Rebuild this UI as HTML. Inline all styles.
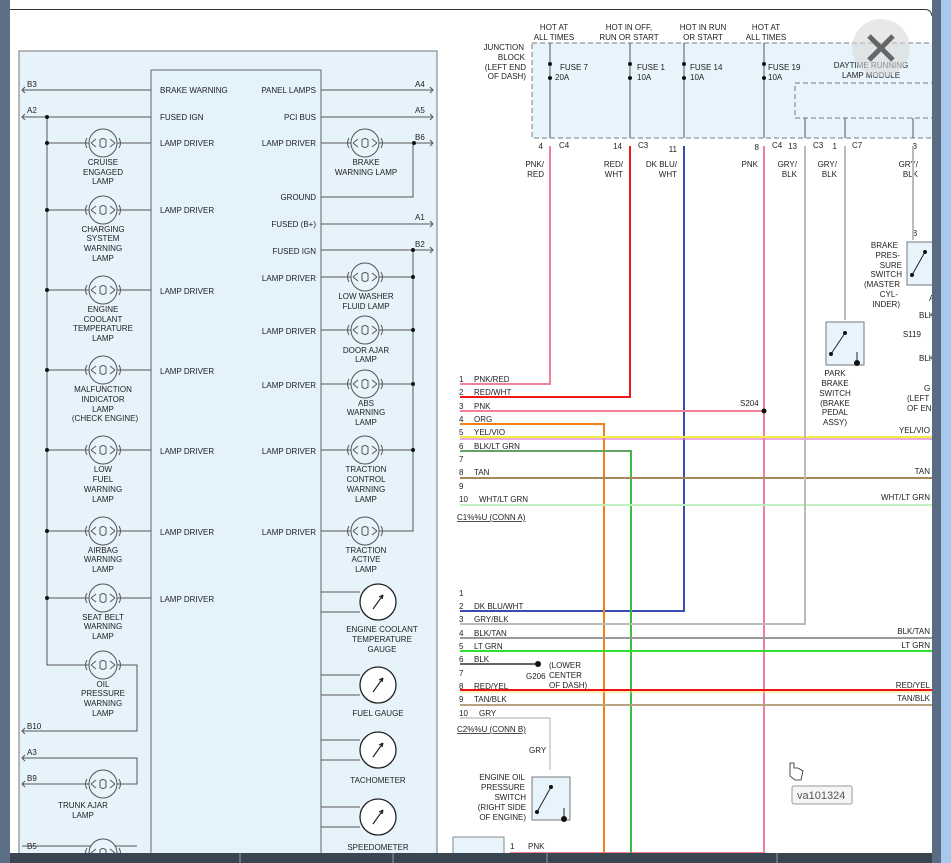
<!DOCTYPE html>
<html><head><meta charset="utf-8"><style>
html,body{margin:0;padding:0;width:951px;height:863px;overflow:hidden;background:#fff}
svg{display:block}
text{font-family:"Liberation Sans",Arial,sans-serif;font-size:8px;fill:#222}
</style></head><body>
<svg width="951" height="863" viewBox="0 0 951 863" xmlns="http://www.w3.org/2000/svg">
<defs>
<g id="lamp"><circle r="14" fill="#e8f4fc" stroke="#555" stroke-width="1"/><path d="M-16,-5 Q-19,0 -16,5 M16,-5 Q19,0 16,5 M-12,0 L-7,-4 M-12,0 L-7,4 M12,0 L7,-4 M12,0 L7,4 M-3,-3 Q0,-6 3,-3 L3,3 Q0,6 -3,3 Z" fill="none" stroke="#555" stroke-width="1"/></g>
<g id="gauge"><circle r="18" fill="#fff" stroke="#222" stroke-width="1.3"/><path d="M-5,7 L5,-7 M5,-7 L1,-5 M5,-7 L4,-3" stroke="#222" fill="none" stroke-width="1.2"/></g>
</defs>
<path d="M10,9.5 H925 Q931,9.5 932,16" stroke="#333" fill="none"/>
<!-- left box -->
<rect x="19" y="51" width="418" height="812" fill="#e6f3fb" stroke="#777"/>
<rect x="151" y="70" width="170" height="793" fill="#e3f2fb" stroke="#666"/>
<g stroke="#555" stroke-width="1" fill="none">
<path d="M22,90 H151 M22,117 H151 M321,90 H433 M321,117 H433 M321,143 H413 V197 H321 M413,143 H433 M321,224 H433 M321,250 H433 M413,250 V531 H321 M321,277 H413 M321,330 H413 M321,384 H413 M321,450 H413"/>
<path d="M47,117 V665 H137 V731 H22 M47,143 H151 M47,210 H151 M47,290 H151 M47,370 H151 M47,450 H151 M47,531 H151 M47,598 H151"/>
<path d="M22,758 H137 V784 H22 M22,846 H137"/>
<path d="M25,87 L22,90 L25,93 M25,114 L22,117 L25,120 M25,728 L22,731 L25,734 M25,755 L22,758 L25,761 M25,781 L22,784 L25,787 M430,87 L433,90 L430,93 M430,114 L433,117 L430,120 M430,140 L433,143 L430,146 M430,221 L433,224 L430,227 M430,247 L433,250 L430,253"/>
<path d="M321,592 H360 M321,612 H360 M321,675 H360 M321,695 H360 M321,740 H360 M321,760 H360 M321,807 H360 M321,827 H360"/>
</g>
<g fill="#111"><circle cx="47" cy="117" r="2"/><circle cx="47" cy="143" r="2"/><circle cx="47" cy="210" r="2"/><circle cx="47" cy="290" r="2"/><circle cx="47" cy="370" r="2"/><circle cx="47" cy="450" r="2"/><circle cx="47" cy="531" r="2"/><circle cx="47" cy="598" r="2"/><circle cx="414" cy="143" r="2"/><circle cx="413" cy="250" r="2"/><circle cx="413" cy="277" r="2"/><circle cx="413" cy="330" r="2"/><circle cx="413" cy="384" r="2"/><circle cx="413" cy="450" r="2"/></g>
<use href="#lamp" x="103" y="143"/><use href="#lamp" x="103" y="210"/><use href="#lamp" x="103" y="290"/><use href="#lamp" x="103" y="370"/><use href="#lamp" x="103" y="450"/><use href="#lamp" x="103" y="531"/><use href="#lamp" x="103" y="598"/><use href="#lamp" x="103" y="665"/><use href="#lamp" x="103" y="784"/><use href="#lamp" x="103" y="853"/>
<use href="#lamp" x="365" y="143"/><use href="#lamp" x="365" y="277"/><use href="#lamp" x="365" y="330"/><use href="#lamp" x="365" y="384"/><use href="#lamp" x="365" y="450"/><use href="#lamp" x="365" y="531"/>
<use href="#gauge" x="378" y="602"/><use href="#gauge" x="378" y="685"/><use href="#gauge" x="378" y="750"/><use href="#gauge" x="378" y="817"/>
<g>
<text x="27" y="87">B3</text><text x="27" y="113">A2</text><text x="415" y="87">A4</text><text x="415" y="113">A5</text><text x="415" y="140">B6</text><text x="415" y="220">A1</text><text x="415" y="247">B2</text>
<text x="27" y="729">B10</text><text x="27" y="755">A3</text><text x="27" y="781">B9</text><text x="27" y="849">B5</text>
<text x="160" y="93">BRAKE WARNING</text><text x="160" y="120">FUSED IGN</text>
<text x="160" y="146">LAMP DRIVER</text><text x="160" y="213">LAMP DRIVER</text><text x="160" y="294">LAMP DRIVER</text><text x="160" y="374">LAMP DRIVER</text><text x="160" y="454">LAMP DRIVER</text><text x="160" y="535">LAMP DRIVER</text><text x="160" y="602">LAMP DRIVER</text>
</g>
<g text-anchor="end">
<text x="316" y="93">PANEL LAMPS</text><text x="316" y="120">PCI BUS</text><text x="316" y="146">LAMP DRIVER</text><text x="316" y="200">GROUND</text><text x="316" y="227">FUSED (B+)</text><text x="316" y="254">FUSED IGN</text>
<text x="316" y="281">LAMP DRIVER</text><text x="316" y="334">LAMP DRIVER</text><text x="316" y="388">LAMP DRIVER</text><text x="316" y="454">LAMP DRIVER</text><text x="316" y="535">LAMP DRIVER</text>
</g>
<g text-anchor="middle">
<text x="103" y="165">CRUISE</text><text x="103" y="175">ENGAGED</text><text x="103" y="184">LAMP</text>
<text x="103" y="232">CHARGING</text><text x="103" y="241">SYSTEM</text><text x="103" y="251">WARNING</text><text x="103" y="261">LAMP</text>
<text x="103" y="312">ENGINE</text><text x="103" y="322">COOLANT</text><text x="103" y="331">TEMPERATURE</text><text x="103" y="341">LAMP</text>
<text x="103" y="392">MALFUNCTION</text><text x="103" y="402">INDICATOR</text><text x="103" y="412">LAMP</text><text x="105" y="421">(CHECK ENGINE)</text>
<text x="103" y="472">LOW</text><text x="103" y="482">FUEL</text><text x="103" y="492">WARNING</text><text x="103" y="502">LAMP</text>
<text x="103" y="553">AIRBAG</text><text x="103" y="562">WARNING</text><text x="103" y="572">LAMP</text>
<text x="103" y="620">SEAT BELT</text><text x="103" y="629">WARNING</text><text x="103" y="639">LAMP</text>
<text x="103" y="687">OIL</text><text x="103" y="696">PRESSURE</text><text x="103" y="706">WARNING</text><text x="103" y="716">LAMP</text>
<text x="83" y="808">TRUNK AJAR</text><text x="83" y="818">LAMP</text>
<text x="366" y="165">BRAKE</text><text x="366" y="175">WARNING LAMP</text>
<text x="366" y="299">LOW WASHER</text><text x="366" y="309">FLUID LAMP</text>
<text x="366" y="353">DOOR AJAR</text><text x="366" y="362">LAMP</text>
<text x="366" y="406">ABS</text><text x="366" y="415">WARNING</text><text x="366" y="425">LAMP</text>
<text x="366" y="472">TRACTION</text><text x="366" y="482">CONTROL</text><text x="366" y="492">WARNING</text><text x="366" y="502">LAMP</text>
<text x="366" y="553">TRACTION</text><text x="366" y="562">ACTIVE</text><text x="366" y="572">LAMP</text>
<text x="382" y="632">ENGINE COOLANT</text><text x="382" y="642">TEMPERATURE</text><text x="382" y="652">GAUGE</text>
<text x="378" y="716">FUEL GAUGE</text><text x="378" y="783">TACHOMETER</text><text x="378" y="850">SPEEDOMETER</text>
</g>
<!-- right side -->
<rect x="532" y="43" width="420" height="95" fill="#e8f4fc" stroke="#777" stroke-dasharray="5,3"/>
<rect x="795" y="83" width="157" height="35" fill="#e8f4fc" stroke="#777" stroke-dasharray="5,3"/>
<g text-anchor="middle">
<text x="554" y="30">HOT AT</text><text x="554" y="40">ALL TIMES</text>
<text x="629" y="30">HOT IN OFF,</text><text x="629" y="40">RUN OR START</text>
<text x="703" y="30">HOT IN RUN</text><text x="703" y="40">OR START</text>
<text x="766" y="30">HOT AT</text><text x="766" y="40">ALL TIMES</text>
<text x="871" y="68">DAYTIME RUNNING</text><text x="871" y="78">LAMP MODULE</text>
</g>
<g text-anchor="end">
<text x="524" y="50">JUNCTION</text><text x="525" y="60">BLOCK</text><text x="526" y="70">(LEFT END</text><text x="526" y="79">OF DASH)</text>
<text x="544" y="167">PNK/</text><text x="544" y="177">RED</text><text x="623" y="167">RED/</text><text x="623" y="177">WHT</text><text x="677" y="167">DK BLU/</text><text x="677" y="177">WHT</text><text x="758" y="167">PNK</text>
<text x="797" y="167">GRY/</text><text x="797" y="177">BLK</text><text x="837" y="167">GRY/</text><text x="837" y="177">BLK</text><text x="918" y="167">GRY/</text><text x="918" y="177">BLK</text>
<text x="543" y="149">4</text><text x="622" y="149">14</text><text x="677" y="152">11</text><text x="759" y="150">8</text><text x="797" y="149">13</text><text x="837" y="149">1</text><text x="917" y="149">3</text>
<text x="930" y="433">YEL/VIO</text><text x="930" y="474">TAN</text><text x="930" y="500">WHT/LT GRN</text><text x="930" y="634">BLK/TAN</text><text x="930" y="648">LT GRN</text><text x="930" y="688">RED/YEL</text><text x="930" y="701">TAN/BLK</text>
<text x="898" y="248">BRAKE</text><text x="900" y="258">PRES-</text><text x="902" y="268">SURE</text><text x="902" y="277">SWITCH</text><text x="900" y="287">(MASTER</text><text x="898" y="297">CYL-</text><text x="900" y="307">INDER)</text>
<text x="921" y="337">S119</text>
</g>
<g>
<text x="560" y="70">FUSE 7</text><text x="555" y="80">20A</text><text x="637" y="70">FUSE 1</text><text x="637" y="80">10A</text><text x="690" y="70">FUSE 14</text><text x="690" y="80">10A</text><text x="768" y="70">FUSE 19</text><text x="768" y="80">10A</text>
<text x="559" y="148">C4</text><text x="638" y="148">C3</text><text x="772" y="148">C4</text><text x="813" y="148">C3</text><text x="852" y="148">C7</text>
<text x="929" y="301">A</text><text x="919" y="318">BLK</text><text x="919" y="361">BLK</text><text x="924" y="391">G</text><text x="907" y="401">(LEFT</text><text x="907" y="411">OF EN</text><text x="912" y="236">B</text>
</g>
<g stroke="#555" fill="none">
<path d="M550,43 V138 M630,43 V138 M684,43 V138 M764,43 V138 M805,118 V138 M845,118 V138 M913,118 V138"/>
</g>
<g fill="#111"><circle cx="550" cy="64" r="2"/><circle cx="550" cy="78" r="2"/><circle cx="630" cy="64" r="2"/><circle cx="630" cy="78" r="2"/><circle cx="684" cy="64" r="2"/><circle cx="684" cy="78" r="2"/><circle cx="764" cy="64" r="2"/><circle cx="764" cy="78" r="2"/></g>
<g fill="none" stroke-width="2">
<path d="M550,146 V384 H460" stroke="#f48098"/>
<path d="M630,146 V397 H460" stroke="#f21818"/>
<path d="M684,146 V611 H460" stroke="#3c4bb0"/>
<path d="M764,146 V853 H510" stroke="#f48098"/>
<path d="M764,411 H460" stroke="#f48098"/>
<path d="M604,853 V424 H460" stroke="#f48018"/>
<path d="M631,853 V451 H460" stroke="#3fbb3f"/>
<path d="M631,451 H460" stroke="#888" stroke-width="1"/>
<path d="M460,437 H932" stroke="#f0f040"/><path d="M460,439 H932" stroke="#e070d0" stroke-width="1.2"/>
<path d="M460,478 H932" stroke="#a8875a"/>
<path d="M460,505 H932" stroke="#c0f0c0"/>
<path d="M805,146 V624 H460" stroke="#bbb"/>
<path d="M845,146 V320" stroke="#bbb"/>
<path d="M913,146 V240" stroke="#bbb"/>
<path d="M460,638 H932" stroke="#999"/>
<path d="M460,651 H932" stroke="#30e030"/>
<path d="M460,664 H535" stroke="#666"/>
<path d="M460,690 H932" stroke="#f01010"/><path d="M460,692 H932" stroke="#f0e070" stroke-width="1"/>
<path d="M460,705 H932" stroke="#b8a480"/>
<path d="M460,718 H550 V770" stroke="#bbb" stroke-width="1.2"/>
</g>
<circle cx="764" cy="411" r="2.5" fill="#111"/>
<circle cx="538" cy="664" r="3" fill="#111"/>
<g>
<text x="459" y="382">1</text><text x="474" y="382">PNK/RED</text><text x="459" y="395">2</text><text x="474" y="395">RED/WHT</text><text x="459" y="409">3</text><text x="474" y="409">PNK</text><text x="459" y="422">4</text><text x="474" y="422">ORG</text><text x="459" y="435">5</text><text x="474" y="435">YEL/VIO</text><text x="459" y="449">6</text><text x="474" y="449">BLK/LT GRN</text><text x="459" y="462">7</text><text x="459" y="475">8</text><text x="474" y="475">TAN</text><text x="459" y="489">9</text><text x="459" y="502">10</text><text x="479" y="502">WHT/LT GRN</text>
<text x="457" y="520" text-decoration="underline">C1%%U (CONN A)</text>
<text x="459" y="596">1</text><text x="459" y="609">2</text><text x="474" y="609">DK BLU/WHT</text><text x="459" y="622">3</text><text x="474" y="622">GRY/BLK</text><text x="459" y="636">4</text><text x="474" y="636">BLK/TAN</text><text x="459" y="649">5</text><text x="474" y="649">LT GRN</text><text x="459" y="662">6</text><text x="474" y="662">BLK</text><text x="459" y="676">7</text><text x="459" y="689">8</text><text x="474" y="689">RED/YEL</text><text x="459" y="702">9</text><text x="474" y="702">TAN/BLK</text><text x="459" y="716">10</text><text x="479" y="716">GRY</text>
<text x="457" y="732" text-decoration="underline">C2%%U (CONN B)</text>
<text x="526" y="679">G206</text><text x="549" y="668">(LOWER</text><text x="549" y="678">CENTER</text><text x="549" y="688">OF DASH)</text>
<text x="529" y="753">GRY</text><text x="740" y="406">S204</text>
<text x="510" y="849">1</text><text x="528" y="849">PNK</text>
</g>
<g text-anchor="middle">
<text x="835" y="376">PARK</text><text x="835" y="386">BRAKE</text><text x="835" y="396">SWITCH</text><text x="835" y="406">(BRAKE</text><text x="835" y="415">PEDAL</text><text x="835" y="425">ASSY)</text>
</g>
<g text-anchor="end">
<text x="525" y="780">ENGINE OIL</text><text x="525" y="790">PRESSURE</text><text x="526" y="800">SWITCH</text><text x="526" y="810">(RIGHT SIDE</text><text x="526" y="820">OF ENGINE)</text>
</g>
<rect x="826" y="322" width="38" height="43" fill="#e8f4fc" stroke="#777"/>
<path d="M831,354 L845,333 M857,352 V363" stroke="#222" fill="none"/><circle cx="831" cy="354" r="2" fill="#111"/><circle cx="845" cy="333" r="2" fill="#111"/><circle cx="857" cy="363" r="3" fill="#111"/>
<rect x="907" y="242" width="30" height="43" fill="#e8f4fc" stroke="#777"/>
<path d="M912,275 L925,252" stroke="#222"/><circle cx="912" cy="275" r="2" fill="#111"/><circle cx="925" cy="252" r="2" fill="#111"/>
<rect x="532" y="777" width="38" height="43" fill="#e8f4fc" stroke="#777"/>
<path d="M537,812 L551,787 M564,808 V818" stroke="#222" fill="none"/><circle cx="537" cy="812" r="2" fill="#111"/><circle cx="551" cy="787" r="2" fill="#111"/><circle cx="564" cy="819" r="3" fill="#111"/>
<rect x="453" y="837" width="51" height="20" fill="#e8f4fc" stroke="#888"/>
<!-- close button -->
<circle cx="881" cy="48" r="29" fill="#d8d8d8" opacity="0.6"/>
<path d="M869,36 L893,60 M893,36 L869,60" stroke="#666" stroke-width="5"/>
<!-- tooltip -->
<rect x="792" y="786" width="60" height="18" fill="#f6f6f8" stroke="#999" rx="2"/>
<text x="797" y="799" style="font-size:11px;fill:#555">va101324</text>
<path d="M790,763 V776 L795,780 H801 L803,771 L798,768 L794,768 V763 Z" fill="#fff" stroke="#222" stroke-width="0.8"/>
<!-- side bars -->
<rect x="0" y="0" width="10" height="863" fill="#5c6f85"/>
<rect x="932" y="0" width="9" height="863" fill="#5a6c82"/>
<rect x="941" y="0" width="10" height="863" fill="#a9c9ec"/>
<!-- toolbar -->
<rect x="10" y="853" width="922" height="10" fill="#3a4552"/>
<path d="M240,853 V863 M393,853 V863 M547,853 V863 M777,853 V863" stroke="#999"/>
</svg>
</body></html>
